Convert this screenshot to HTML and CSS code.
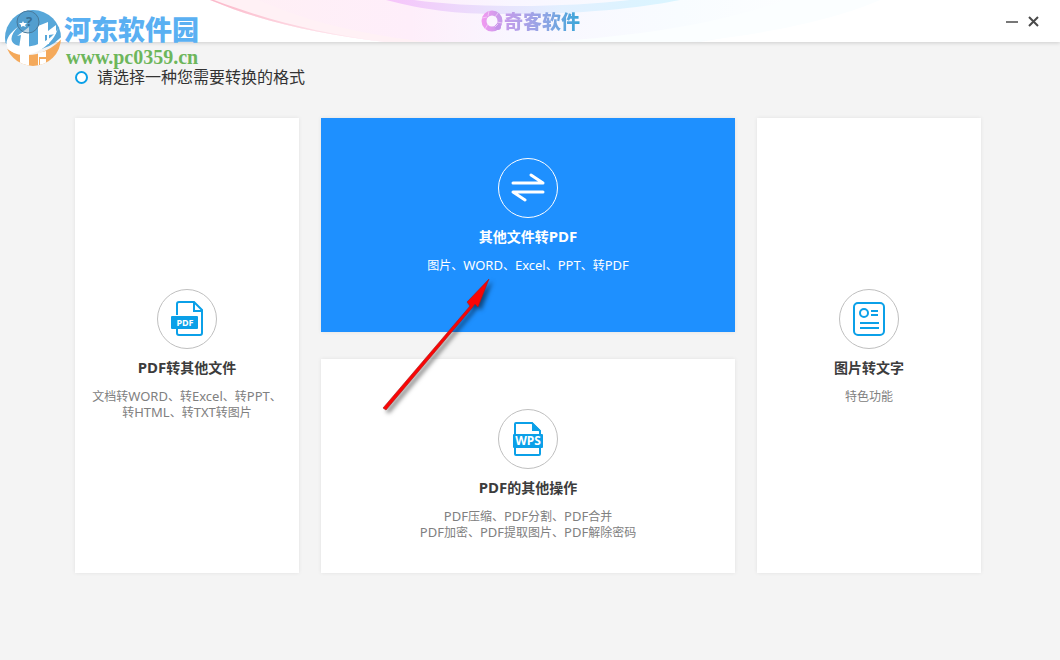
FILE: index.html
```html
<!DOCTYPE html>
<html lang="zh-CN">
<head>
<meta charset="utf-8">
<title>奇客软件</title>
<link rel="stylesheet" href="styles.css">
</head>
<body>
<header class="titlebar">
  <svg class="waves" viewBox="0 0 1060 42" preserveAspectRatio="none" aria-hidden="true">
    <defs>
      <linearGradient id="wash"><stop offset="0" stop-color="#fff0f4"/><stop offset=".3" stop-color="#feeefa"/><stop offset=".45" stop-color="#f9f6ff"/><stop offset=".7" stop-color="#f8fcff"/><stop offset="1" stop-color="#ffffff"/></linearGradient>
      <linearGradient id="ribbon"><stop offset="0" stop-color="#f6c4fa"/><stop offset=".35" stop-color="#e9e0fc"/><stop offset=".6" stop-color="#e2f0ff"/><stop offset="1" stop-color="#d9f5ff"/></linearGradient>
      <linearGradient id="rim"><stop offset="0" stop-color="#fbb9ca"/><stop offset="1" stop-color="#fff4f8"/></linearGradient>
    </defs>
    <path d="M210 0C265 23 320 34 385 42H700C780 28 840 14 880 0Z" fill="url(#wash)"/>
    <path d="M258 0C310 22 350 32 425 42H385C320 34 265 23 210 0Z" fill="#fff1f5"/>
    <path d="M210 0C265 23 320 34 385 42C320 33 270 21 214 0Z" fill="url(#rim)"/>
    <path d="M386 0C425 10 455 14 500 14C590 15 650 6 680 0H630C570 7 480 9 414 0Z" fill="url(#ribbon)"/>
    <path d="M545 42C650 36 730 20 785 0H880C840 18 770 34 690 42Z" fill="#fbfeff"/>
  </svg>
  <div class="brand">
    <svg width="23" height="23" viewBox="0 0 23 23" aria-hidden="true">
      <defs><linearGradient id="q"><stop offset="0" stop-color="#ee9af0"/><stop offset="1" stop-color="#c79bea"/></linearGradient></defs>
      <circle cx="12" cy="11" r="8" fill="none" stroke="url(#q)" stroke-width="5"/>
      <circle cx="18" cy="17" r="3" fill="#c593ea"/>
      <path d="M2 8L7 7M9 1L8 6M18 3L15 7M22 13L17 12M15 17L18 14M5 19L8 14" stroke="#f6d9fa" stroke-width="1" stroke-opacity=".7"/>
    </svg>
    <span class="brand-name">奇客软件</span>
  </div>
  <div class="window-actions">
    <button type="button" class="window-button" aria-label="最小化"><svg width="12" height="12" viewBox="0 0 12 12"><path d="M0 7H12" stroke="#777" stroke-width="2"/></svg></button>
    <button type="button" class="window-button" aria-label="关闭"><svg width="12" height="12" viewBox="0 0 12 12"><path d="M1 2L10 11M10 2L1 11" stroke="#4a4a4a" stroke-width="2"/></svg></button>
  </div>
</header>

<main class="content">
  <h1 class="prompt"><span class="ring"></span>请选择一种您需要转换的格式</h1>
  <div class="cards">
    <button type="button" class="card card-side card-from">
      <span class="badge">
        <svg width="34" height="38" viewBox="0 0 34 38" aria-hidden="true">
          <path d="M7 15V4Q7 2 9 2H24L32 10V33Q32 35 30 35H9Q7 35 7 33V28" fill="none" stroke="#0ba0e8" stroke-width="2"/>
          <path d="M24 2V11H32" fill="none" stroke="#0ba0e8" stroke-width="2"/>
          <rect x="1" y="16" width="27" height="13" rx="1" fill="#0ba0e8"/>
          <text x="15" y="26" class="glyph glyph-pdf">PDF</text>
        </svg>
      </span>
      <span class="title"><span class="latin">PDF</span>转其他文件</span>
      <span class="desc">文档转<span class="latin">WORD</span>、转<span class="latin">Excel</span>、转<span class="latin">PPT</span>、<br>转<span class="latin">HTML</span>、转<span class="latin">TXT</span>转图片</span>
    </button>
    <button type="button" class="card card-active card-to">
      <span class="badge">
        <svg width="34" height="30" viewBox="0 0 34 30" aria-hidden="true">
          <path d="M2 10H32L20 2M32 19H2L14 27" fill="none" stroke="#fff" stroke-width="3" stroke-linecap="round" stroke-linejoin="round"/>
        </svg>
      </span>
      <span class="title">其他文件转<span class="latin">PDF</span></span>
      <span class="desc">图片、<span class="latin">WORD</span>、<span class="latin">Excel</span>、<span class="latin">PPT</span>、转<span class="latin">PDF</span></span>
    </button>
    <button type="button" class="card card-tools">
      <span class="badge">
        <svg width="32" height="36" viewBox="0 0 32 36" aria-hidden="true">
          <path d="M3 14V3Q3 2 4 2H20L28 10V33Q28 34 27 34H4Q3 34 3 33V25" fill="none" stroke="#0ba0e8" stroke-width="2"/>
          <path d="M20 1L29 10H20Z" fill="#0ba0e8"/>
          <rect x="1" y="13" width="30" height="14" rx="1" fill="#0ba0e8"/>
          <text x="16" y="24" class="glyph glyph-wps">WPS</text>
        </svg>
      </span>
      <span class="title"><span class="latin">PDF</span>的其他操作</span>
      <span class="desc"><span class="latin">PDF</span>压缩、<span class="latin">PDF</span>分割、<span class="latin">PDF</span>合并<br><span class="latin">PDF</span>加密、<span class="latin">PDF</span>提取图片、<span class="latin">PDF</span>解除密码</span>
    </button>
    <button type="button" class="card card-side card-ocr">
      <span class="badge">
        <svg width="32" height="34" viewBox="0 0 32 34" aria-hidden="true">
          <g fill="none" stroke="#0ba0e8" stroke-width="2">
            <rect x="1" y="1" width="30" height="32" rx="4"/>
            <circle cx="11" cy="11" r="4"/>
            <path d="M18 9H25M18 13H25M7 21H26M7 26H26"/>
          </g>
        </svg>
      </span>
      <span class="title">图片转文字</span>
      <span class="desc">特色功能</span>
    </button>
  </div>
</main>

<div class="watermark">
  <svg width="60" height="60" viewBox="0 0 60 60" aria-hidden="true">
    <defs><clipPath id="globe"><circle cx="29" cy="29" r="28"/></clipPath></defs>
    <g clip-path="url(#globe)">
      <path d="M0 0H60V25Q47 40 31 41Q14 42 1 34Z" fill="#57a7d9"/>
      <path d="M0 38Q16 49 33 45Q50 40 60 27V60H0Z" fill="#f4a95b"/>
      <path d="M15 39L17 26L13 27L25 18V39ZM34 38V17L44 13V22L52 16V25L45 26V35H43V26H41V37Z" fill="#fff"/>
      <path d="M16 43L25 45V60H16ZM34 44L42 42V48H35V60H34Z" fill="#fff"/>
      <path d="M36 50H42V60H36Z" fill="#fff"/>
    </g>
    <path d="M14 18C0 28-1 39 10 44C25 51 49 38 54 19C49 31 29 40 16 37C4 35 6 26 14 18Z" fill="#fff"/>
    <circle cx="24" cy="13" r="11" fill="#4d8fb9" fill-opacity=".35" stroke="#48799b" stroke-width="1"/>
    <path d="M19 12L20 14H23L21 16L22 18L19 17L17 18L17 16L15 14H18Z" fill="#fff"/>
    <text x="25" y="17" class="glyph glyph-help">?</text>
  </svg>
  <div class="watermark-text">
    <span class="watermark-name">河东软件园</span>
    <span class="watermark-url">www.pc0359.cn</span>
  </div>
</div>

<svg class="pointer" width="120" height="144" viewBox="0 0 120 144" aria-hidden="true">
  <path d="M3 134L90 32L87 28L109 5L98 33L95 30L92 34L6 136Z" fill="#fa0505" stroke="#a51b1b" stroke-width="1" stroke-opacity=".6"/>
</svg>
</body>
</html>
```
FILE: styles.css
```css
* {
  box-sizing: border-box;
}

body {
  margin: 0;
  min-height: 100vh;
  position: relative;
  background: #f4f4f4;
  color: #333;
  font-family: "Noto Sans", "Noto Sans CJK SC", sans-serif;
}

.titlebar {
  position: relative;
  display: grid;
  grid-template-columns: 1fr auto 1fr;
  align-items: center;
  height: 42px;
  padding: 0 20px;
  background: #fff;
  box-shadow: 0 1px 4px rgba(0, 0, 0, 0.16);
}

.waves {
  position: absolute;
  inset: 0;
  width: 100%;
  height: 100%;
}

.brand {
  position: relative;
  grid-column: 2;
  display: flex;
  align-items: center;
  gap: 1px;
}

.brand-name {
  font-family: "Noto Sans CJK SC", sans-serif;
  font-size: 19px;
  line-height: 24px;
  font-weight: 900;
  color: transparent;
  background: linear-gradient(90deg, #c79ceb, #8ea5e4 55%, #37a5d8);
  background-clip: text;
  -webkit-background-clip: text;
}

.window-actions {
  position: relative;
  display: flex;
  justify-content: flex-end;
  gap: 10px;
}

.window-button {
  display: flex;
  padding: 0;
  border: 0;
  background: none;
}

.content {
  padding: 23px 79px 24px 75px;
}

.prompt {
  display: flex;
  align-items: center;
  gap: 9px;
  margin: 0 0 29px;
  font-size: 16px;
  line-height: 24px;
  font-weight: 400;
}

.ring {
  width: 13px;
  height: 13px;
  border: 2px solid #0ba0e8;
  border-radius: 50%;
  background: #fff;
}

.cards {
  display: grid;
  grid-template-columns: 224fr 414fr 224fr;
  grid-template-rows: 214px 214px;
  grid-template-areas: "from to ocr" "from tools ocr";
  gap: 27px 22px;
}

.card-from { grid-area: from; }
.card-to { grid-area: to; }
.card-tools { grid-area: tools; }
.card-ocr { grid-area: ocr; }

.card {
  display: flex;
  flex-direction: column;
  align-items: center;
  justify-content: flex-start;
  padding: 50px 8px 16px;
  border: 0;
  background: #fff;
  box-shadow: 0 0 4px rgba(0, 0, 0, 0.08);
  color: #808080;
  font-family: inherit;
}

.card-side {
  padding-top: 171px;
}

.card-active {
  padding-top: 40px;
  background: #1e90ff;
  color: #fff;
}

.badge {
  display: flex;
  align-items: center;
  justify-content: center;
  width: 60px;
  height: 60px;
  border: 1px solid #bfbfbf;
  border-radius: 50%;
}

.card-active .badge {
  border-color: #fff;
}

.title {
  margin-top: 9px;
  font-size: 14px;
  line-height: 20px;
  font-weight: 700;
  color: #3c3c3c;
}

.title .latin {
  font-size: 15px;
  line-height: 14px;
}

.card-active .title {
  color: #fff;
}

.desc {
  margin-top: 11px;
  font-size: 12px;
  line-height: 16px;
}

.desc .latin {
  font-size: 13px;
  line-height: 12px;
}

.glyph {
  font-family: "Noto Sans", sans-serif;
  font-weight: 700;
  text-anchor: middle;
  fill: #fff;
}

.glyph-pdf { font-size: 9px; }
.glyph-wps { font-size: 12px; }

.glyph-help {
  font-size: 13px;
  fill: #386f94;
}

.watermark {
  position: absolute;
  left: 4px;
  top: 9px;
  display: flex;
  pointer-events: none;
}

.watermark-text {
  display: flex;
  flex-direction: column;
  padding-top: 4px;
}

.watermark-name {
  font-family: "Noto Sans CJK SC", sans-serif;
  font-size: 27px;
  line-height: 32px;
  font-weight: 900;
  color: #5ab0f2;
}

.watermark-url {
  padding-left: 2px;
  font-family: "Liberation Serif", serif;
  font-size: 20px;
  line-height: 24px;
  font-weight: 700;
  color: #6db65b;
}

.pointer {
  position: absolute;
  left: 380px;
  top: 274px;
  pointer-events: none;
  filter: drop-shadow(3px 3px 2px rgba(0, 0, 0, 0.5));
}
```
